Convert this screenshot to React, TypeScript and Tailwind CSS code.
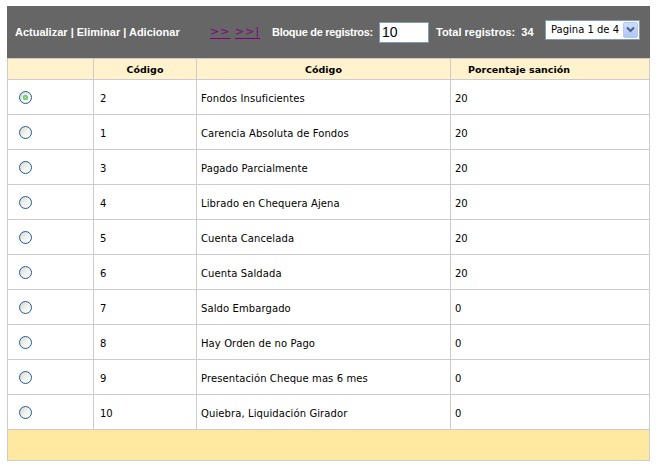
import React from "react";

const rows: [string, string, string][] = [
  ["2", "Fondos Insuficientes", "20"],
  ["1", "Carencia Absoluta de Fondos", "20"],
  ["3", "Pagado Parcialmente", "20"],
  ["4", "Librado en Chequera Ajena", "20"],
  ["5", "Cuenta Cancelada", "20"],
  ["6", "Cuenta Saldada", "20"],
  ["7", "Saldo Embargado", "0"],
  ["8", "Hay Orden de no Pago", "0"],
  ["9", "Presentación Cheque mas 6 mes", "0"],
  ["10", "Quiebra, Liquidación Girador", "0"],
];

function Radio({ checked }: { checked?: boolean }) {
  return (
    <span className="inline-flex items-center justify-center w-[13px] h-[13px] rounded-full border border-[#1f5a96] bg-linear-to-br from-[#d8d6cc] via-[#f2f2ee] to-[#ffffff]">
      {checked && (
        <span className="w-[5px] h-[5px] rounded-full bg-radial from-[#a8f0a8] to-[#21a121]" />
      )}
    </span>
  );
}

export default function App() {
  return (
    <div className="w-[659px] h-[468px] bg-white pt-[6px] pl-[7px] [font-family:'DejaVu_Sans',Verdana,sans-serif]">
      <div className="w-[643px]">
        {/* toolbar */}
        <div className="h-[52px] bg-[#666666] flex items-center pl-[8px] text-white">
          <span className="w-[195px] text-[11px] font-bold [font-family:'Liberation_Sans',Arial,sans-serif] whitespace-nowrap">
            Actualizar | Eliminar | Adicionar
          </span>
          <a className="w-[25px] text-[11px] text-[#800080] underline underline-offset-[3px] tracking-[1px] whitespace-nowrap">
            &gt;&gt;
          </a>
          <a className="w-[37px] text-[11px] text-[#800080] underline underline-offset-[3px] tracking-[1px] whitespace-nowrap">
            &gt;&gt;|
          </a>
          <span className="w-[107px] text-[11px] font-bold tracking-[-0.3px] [font-family:'Liberation_Sans',Arial,sans-serif] whitespace-nowrap">
            Bloque de registros:
          </span>
          <input
            defaultValue="10"
            className="w-[50px] h-[21px] bg-white border border-[#7f9db9] text-black text-[14px] pl-[2px] [font-family:'Liberation_Sans',Arial,sans-serif] outline-none"
          />
          <span className="ml-[7px] w-[109px] text-[11px] font-bold [font-family:'Liberation_Sans',Arial,sans-serif] whitespace-nowrap">
            Total registros:&nbsp; 34
          </span>
          <div className="w-[95px] h-[20px] mb-[5px] bg-white border border-[#7f9db9] flex items-center text-black text-[10px] pl-[5px] pr-[1px]">
            <span className="flex-1 whitespace-nowrap">Pagina 1 de 4</span>
            <span className="w-[15px] h-[16px] rounded-[2px] bg-linear-to-b from-[#cfdcfb] to-[#b0c6f5] border border-[#b4c8f4] flex items-center justify-center">
              <svg width="9" height="7" viewBox="0 0 9 7">
                <path d="M1 1.5 L4.5 5 L8 1.5" fill="none" stroke="#4d6185" strokeWidth="2" />
              </svg>
            </span>
          </div>
        </div>
        {/* table */}
        <div className="border border-[#cccccc] text-[10px] text-black">
          <div className="flex h-[21px] bg-[#fff2cc] border-b border-[#cccccc] font-bold text-[9.5px]">
            <div className="w-[86px] border-r border-[#cccccc]" />
            <div className="w-[103px] border-r border-[#cccccc] flex items-center justify-center pt-[2px]">Código</div>
            <div className="w-[254px] border-r border-[#cccccc] flex items-center justify-center pt-[2px]">Código</div>
            <div className="flex-1 flex items-center pl-[17px] pt-[2px]">Porcentaje sanción</div>
          </div>
          {rows.map((r, i) => (
            <div key={i} className="flex h-[35px] border-b border-[#cccccc]">
              <div className="w-[86px] border-r border-[#cccccc] flex items-center pl-[11px]">
                <Radio checked={i === 0} />
              </div>
              <div className="w-[103px] border-r border-[#cccccc] flex items-center pl-[6px] pt-[2px]">{r[0]}</div>
              <div className="w-[254px] border-r border-[#cccccc] flex items-center pl-[4px] pt-[2px] tracking-[0.1px]">{r[1]}</div>
              <div className="flex-1 flex items-center pl-[4px] pt-[2px]">{r[2]}</div>
            </div>
          ))}
          <div className="h-[30px] bg-[#ffe8a0]" />
        </div>
      </div>
    </div>
  );
}
